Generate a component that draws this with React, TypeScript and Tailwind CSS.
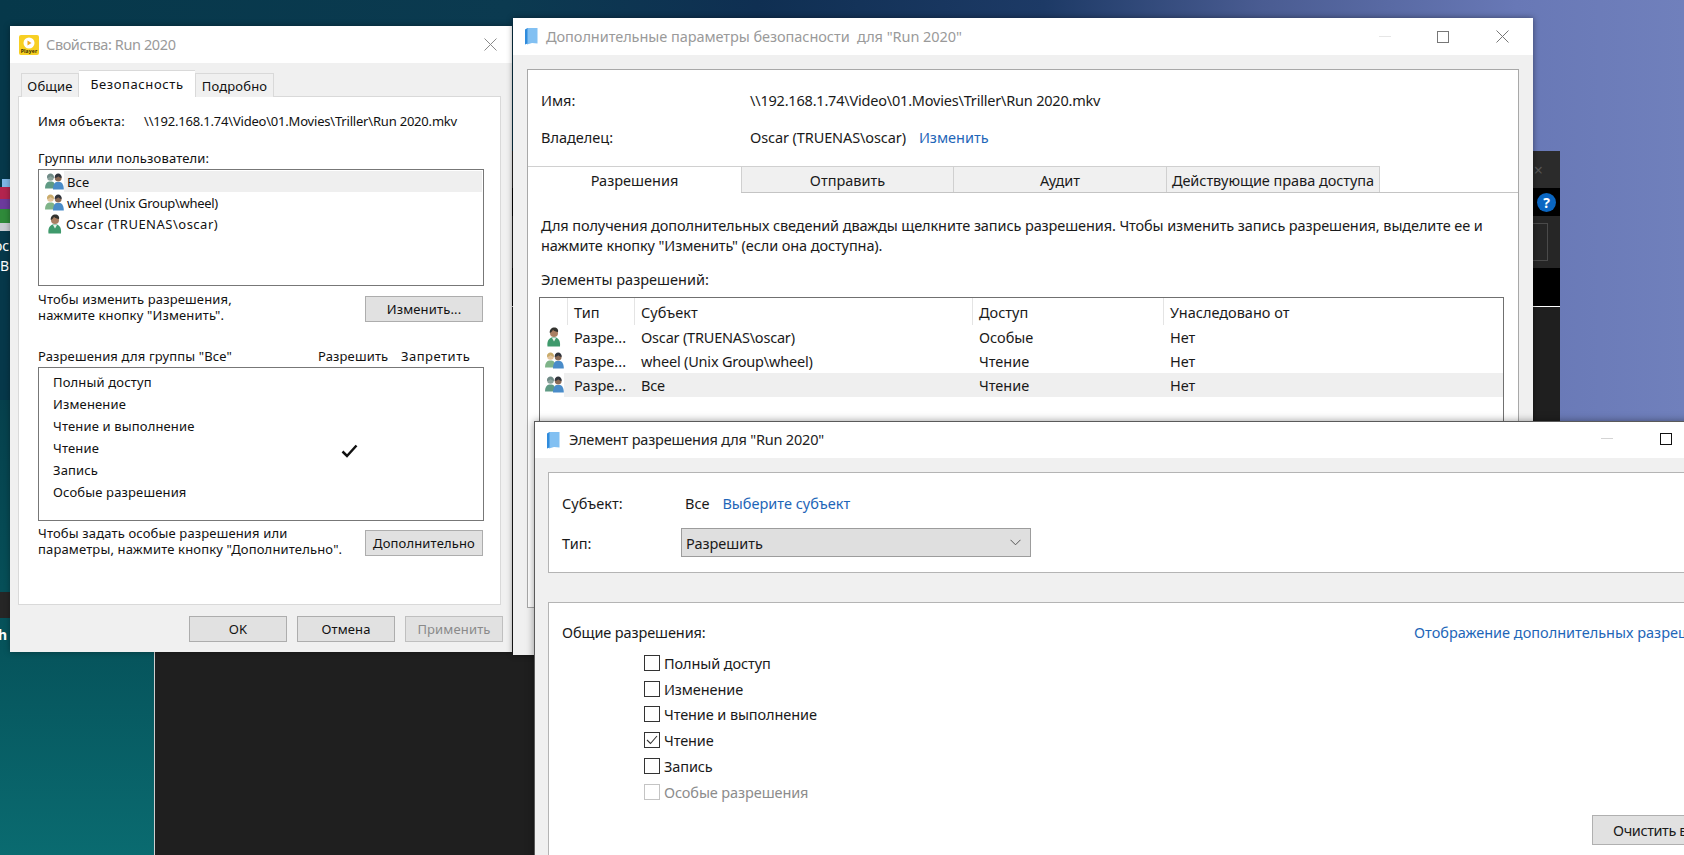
import React from "react";

const PersonIcon = () => (
  <svg width="18" height="20" viewBox="0 0 18 20" className="shrink-0">
    <path d="M2.500 19.500c-.8-5 1.200-8 4-9h4.500c3 1 4.500 4 4 9z" fill="#3f9a6c" />
    <path d="M7 11l2 3.500 2-3.500z" fill="#e8f2ea" />
    <circle cx="9" cy="6" r="4" fill="#a97f62" />
    <path d="M4.800 6c-.5-3.500 2-5.500 4.500-5.500S13.800 2.500 13 5c-2-.2-4-1-5-2.300C7.500 4.200 6 5.500 4.800 6z" fill="#33332f" />
  </svg>
);

const GroupIcon = ({ back, hair, skin }: { back: string; hair: string; skin: string }) => (
  <svg width="19" height="18" viewBox="0 0 19 18" className="shrink-0">
    <path d="M0 15.500c0-4 1.500-6.500 4-7h3c2.500.5 3.500 3 3.500 7z" fill={back} />
    <circle cx="5.500" cy="4.500" r="3.300" fill={skin} />
    <path d="M2 5c-.3-3 1.500-4.500 3.500-4.500S9.200 2 8.900 5C7.500 4.500 6 3.800 5.500 3 4.800 4 3.500 4.800 2 5z" fill={hair} />
    <path d="M8 16.500c0-4 1.300-7 3.500-7.500h3.500c2.500.5 3.800 3.500 3.800 7.500z" fill="#4a8cc9" />
    <circle cx="13.200" cy="5" r="3.400" fill="#8a6a55" />
    <path d="M9.700 5c-.2-3 1.500-4.500 3.500-4.500S16.900 2 16.600 5c-1.500-.3-2.900-1-3.400-1.800-.7.900-2 1.600-3.500 1.800z" fill="#30343c" />
  </svg>
);

const AllIcon = () => <GroupIcon back="#5f9a84" hair="#6f8a86" skin="#8ba39d" />;
const WheelIcon = () => <GroupIcon back="#7fb489" hair="#c9ab6a" skin="#e3c49c" />;

const FolderIcon = () => (
  <svg width="13" height="17" viewBox="0 0 13 17" className="shrink-0">
    <path d="M2 0h10.500v15.500L7 15 2 16.500z" fill="#82c0f2" />
    <path d="M0 1.500L2.500 0v15.500L0 16.500z" fill="#2f8bdc" />
  </svg>
);

const PlayerIcon = () => (
  <div className="w-[20px] h-[20px] rounded-[2px] bg-[#f7cf23] flex flex-col items-center shrink-0 overflow-hidden">
    <svg width="12" height="12" viewBox="0 0 12 12" className="mt-[2px]">
      <circle cx="6" cy="6" r="5.500" fill="#fff" />
      <path d="M4.500 3.500l4 2.500-4 2.500z" fill="#f2a91e" />
    </svg>
    <span className="text-[5px] leading-[5px] font-bold text-[#3a3000]">Player</span>
  </div>
);

const CloseGlyph = ({ color }: { color: string }) => (
  <svg width="13" height="13" viewBox="0 0 13 13">
    <path d="M.5.500l12 12M12.500.500l-12 12" stroke={color} strokeWidth="1" fill="none" />
  </svg>
);

const Win10Button = ({ label, className }: { label: string; className: string }) => (
  <div className={`h-[26px] border border-[#adadad] bg-[#e1e1e1] flex items-center justify-center ${className}`}>
    {label}
  </div>
);

const perms = ["Полный доступ", "Изменение", "Чтение и выполнение", "Чтение", "Запись", "Особые разрешения"];

const PropertiesWindow = () => (
  <div className="absolute left-[10px] top-[26px] w-[502px] h-[626px] flex flex-col bg-[#f0f0f0] shadow-[0_0_6px_rgba(0,0,0,0.35)] text-[13px] leading-[16px] text-[#111] tracking-[0.15px]">
    <div className="h-[37px] bg-white flex items-center pl-[9px] pr-[15px] shrink-0">
      <PlayerIcon />
      <span className="ml-[7px] text-[14.500px] text-[#9a9a9a] tracking-[-0.4px] -mt-[1px]">Свойства: Run 2020</span>
      <div className="ml-auto flex">
        <CloseGlyph color="#8a8a8a" />
      </div>
    </div>

    <div className="flex-1 pl-[8px] pr-[9px] flex flex-col">
      <div className="flex items-end h-[34px] pl-[3px] -mb-px relative z-10 text-center">
        <div className="w-[58px] h-[24px] bg-[#f0f0f0] border border-b-0 border-[#d9d9d9] flex items-center justify-center">Общие</div>
        <div className="w-[116px] h-[27px] bg-white border-t border-[#d9d9d9] pb-[1px] flex items-center justify-center tracking-[0.6px]">Безопасность</div>
        <div className="w-[79px] h-[24px] bg-[#f0f0f0] border border-b-0 border-[#d9d9d9] flex items-center justify-center">Подробно</div>
      </div>

      <div className="mr-[2px] w-[483px] h-[509px] bg-white border border-[#d9d9d9] px-[19px] shrink-0">
        <div className="flex h-[20px] items-center mt-[14px]">
          <span className="w-[106px]">Имя объекта:</span>
          <span className="tracking-[-0.2px]">\\192.168.1.74\Video\01.Movies\Triller\Run 2020.mkv</span>
        </div>
        <div className="h-[20px] flex items-center mt-[17px]">Группы или пользователи:</div>
        <div className="mt-[1px] h-[117px] border border-[#777] p-[1px] w-[446px]">
          <div className="flex items-center h-[21px] pl-[5px]">
            <AllIcon />
            <span className="flex-1 ml-0 pl-[3px] bg-[#efefef] h-full flex items-center">Все</span>
          </div>
          <div className="flex items-center h-[21px] pl-[5px]">
            <WheelIcon />
            <span className="pl-[3px] tracking-[-0.3px]">wheel (Unix Group\wheel)</span>
          </div>
          <div className="flex items-center h-[21px] pl-[6px]">
            <PersonIcon />
            <span className="pl-[2px] tracking-[0.5px]">Oscar (TRUENAS\oscar)</span>
          </div>
        </div>
        <div className="flex mt-[5px] w-[445px] justify-between">
          <div>Чтобы изменить разрешения,<br />нажмите кнопку "Изменить".</div>
          <Win10Button label="Изменить..." className="w-[118px] mt-[5px]" />
        </div>

        <div className="flex items-center h-[20px] mt-[23px]">
          <span className="w-[280px]">Разрешения для группы "Все"</span>
          <span className="w-[83px]">Разрешить</span>
          <span className="tracking-[0.5px]">Запретить</span>
        </div>
        <div className="mt-px h-[154px] w-[446px] border border-[#777] pl-[14px] pt-[3px] relative">
          {perms.map((p) => (
            <div key={p} className="h-[22px] flex items-center">{p}</div>
          ))}
          <svg width="17" height="14" viewBox="0 0 17 14" className="absolute left-[302px] top-[76px]">
            <path d="M1.500 7.500l4.500 4.500L15.500 1.500" stroke="#111" strokeWidth="2.500" fill="none" />
          </svg>
        </div>
        <div className="flex mt-[4px] w-[445px] justify-between">
          <div>Чтобы задать особые разрешения или<br />параметры, нажмите кнопку "Дополнительно".</div>
          <Win10Button label="Дополнительно" className="w-[118px] mt-[5px]" />
        </div>
      </div>

      <div className="flex justify-end gap-[10px] mt-[11px]">
        <Win10Button label="OK" className="w-[98px]" />
        <Win10Button label="Отмена" className="w-[98px]" />
        <Win10Button label="Применить" className="w-[98px] bg-[#cccccc] border-[#bfbfbf] text-[#8a8a8a]" />
      </div>
    </div>
  </div>
);

const tableRows = [
  { icon: <PersonIcon />, who: "Oscar (TRUENAS\\oscar)", access: "Особые", selected: false },
  { icon: <WheelIcon />, who: "wheel (Unix Group\\wheel)", access: "Чтение", selected: false },
  { icon: <AllIcon />, who: "Все", access: "Чтение", selected: true },
];

const AdvancedWindow = () => (
  <div className="absolute left-[513px] top-[18px] w-[1020px] h-[637px] flex flex-col bg-[#f0f0f0] shadow-[0_0_6px_rgba(0,0,0,0.45)] text-[14.500px] leading-[20px] text-[#1a1a1a]">
    <div className="h-[37px] bg-white flex items-center pl-[12px] shrink-0 relative">
      <FolderIcon />
      <span className="ml-[8px] -mt-[2px] text-[#9a9a9a] text-[14.500px] tracking-[-0.05px]">Дополнительные параметры безопасности&nbsp; для "Run 2020"</span>
      <div className="ml-auto flex items-center">
        <div className="w-[12px] h-px bg-[#e6e6e6] mr-[46px]" />
        <div className="w-[12px] h-[12px] border border-[#777] mr-[47px]" />
        <div className="mr-[24px]"><CloseGlyph color="#777" /></div>
      </div>
    </div>

    <div className="flex-1 px-[14px] pt-[14px]">
      <div className="h-[539px] border border-[#a8a8a8] bg-white flex flex-col">
        <div className="px-[13px] pt-[18px]">
          <div className="flex items-center h-[24px]">
            <span className="w-[209px]">Имя:</span>
            <span className="tracking-[-0.2px]">\\192.168.1.74\Video\01.Movies\Triller\Run 2020.mkv</span>
          </div>
          <div className="flex items-center h-[24px] mt-[13px]">
            <span className="w-[209px]">Владелец:</span>
            <span className="tracking-[-0.1px]">Oscar (TRUENAS\oscar)</span>
            <span className="ml-[13px] text-[#1e66b8]">Изменить</span>
          </div>
        </div>

        <div className="mt-[17px] h-[27px] border-b border-[#c4c4c4] flex text-center shrink-0 relative">
          <div className="w-[213px] h-[27px] bg-white border-t border-[#d0d0d0] flex items-center justify-center relative z-10">Разрешения</div>
          <div className="w-[212px] h-[26px] bg-[#f0f0f0] border-t border-l border-[#d0d0d0] flex items-center justify-center">Отправить</div>
          <div className="w-[213px] h-[26px] bg-[#f0f0f0] border-t border-l border-[#d0d0d0] flex items-center justify-center">Аудит</div>
          <div className="w-[214px] h-[26px] bg-[#f0f0f0] border-t border-x border-[#d0d0d0] flex items-center justify-center tracking-[-0.05px]">Действующие права доступа</div>
        </div>

        <div className="pl-[11px] pr-[14px] pt-[22px]">
          <p className="pl-[2px] tracking-[-0.1px]">
            Для получения дополнительных сведений дважды щелкните запись разрешения. Чтобы изменить запись разрешения, выделите ее и<br />
            нажмите кнопку "Изменить" (если она доступна).
          </p>
          <div className="pl-[2px] mt-[14px]">Элементы разрешений:</div>
          <div className="mt-[8px] h-[220px] border border-[#707070]">
            <div className="grid grid-cols-[27px_67px_338px_191px_1fr] h-[27px]">
              <div />
              <div className="border-l border-[#e4e4e4] pl-[6px] flex items-center">Тип</div>
              <div className="border-l border-[#e4e4e4] pl-[6px] flex items-center">Субъект</div>
              <div className="border-l border-[#e4e4e4] pl-[6px] flex items-center">Доступ</div>
              <div className="border-l border-[#e4e4e4] pl-[6px] flex items-center">Унаследовано от</div>
            </div>
            {tableRows.map((r) => (
              <div key={r.who} className="flex h-[24px] items-center">
                <div className="w-[24px] pl-[5px] shrink-0 h-[20px] flex items-center">{r.icon}</div>
                <div className={`flex-1 h-full grid grid-cols-[70px_338px_191px_1fr] items-center ${r.selected ? "bg-[#efefef]" : ""}`}>
                  <span className="pl-[10px]">Разре...</span>
                  <span className="pl-[7px] tracking-[-0.2px]">{r.who}</span>
                  <span className="pl-[7px]">{r.access}</span>
                  <span className="pl-[7px]">Нет</span>
                </div>
              </div>
            ))}
          </div>
        </div>
      </div>
    </div>
  </div>
);

const EntryWindow = () => (
  <div className="absolute left-[534px] top-[421px] w-[1300px] h-[500px] flex flex-col bg-[#f0f0f0] border-l border-t border-[#5a5a5a] shadow-[0_0_8px_rgba(0,0,0,0.4)] text-[14.500px] leading-[20px] text-[#1a1a1a]">
    <div className="h-[36px] bg-white flex items-center pl-[12px] shrink-0 relative">
      <FolderIcon />
      <span className="ml-[9px] -mt-[3px] text-[#222] tracking-[-0.2px]">Элемент разрешения для "Run 2020"</span>
      <div className="absolute left-[1066px] top-[16px] w-[12px] h-px bg-[#d4d4d4]" />
      <div className="absolute left-[1125px] top-[11px] w-[12px] h-[12px] border border-[#111]" />
    </div>

    <div className="pl-[13px] pt-[14px]">
      <div className="h-[101px] border border-[#b4b4b4] bg-white pl-[13px] pt-[20px]">
        <div className="flex items-center h-[20px]">
          <span className="w-[123px]">Субъект:</span>
          <span>Все</span>
          <span className="ml-[13px] text-[#1e66b8]">Выберите субъект</span>
        </div>
        <div className="flex items-center h-[29px] mt-[15px]">
          <span className="w-[119px]">Тип:</span>
          <div className="w-[350px] h-[29px] bg-[#dfdfdf] border border-[#9c9c9c] pl-[4px] pr-[9px] flex items-center justify-between">
            Разрешить
            <svg width="11" height="7" viewBox="0 0 11 7">
              <path d="M.5.800l5 5 5-5" stroke="#555" fill="none" />
            </svg>
          </div>
        </div>
      </div>

      <div className="mt-[29px] h-[400px] border border-[#b4b4b4] bg-white pl-[13px] pt-[19px]">
        <div className="flex items-center h-[20px]">
          <span className="w-[852px] tracking-[-0.1px]">Общие разрешения:</span>
          <span className="text-[#1e66b8] whitespace-nowrap">Отображение дополнительных разрешений</span>
        </div>
        <div className="ml-[82px] mt-[8px]">
          {perms.map((p, i) => {
            const disabled = i === 5;
            return (
              <div key={p} className={`h-[25.800px] flex items-center tracking-[-0.1px] ${disabled ? "text-[#8c8c8c]" : ""}`}>
                <div className={`w-[16px] h-[16px] border mr-[4px] flex items-center justify-center ${disabled ? "border-[#c4c4c4]" : "border-[#333]"}`}>
                  {i === 3 && (
                    <svg width="12" height="10" viewBox="0 0 12 10">
                      <path d="M1 5l3.500 3.500L11 1" stroke="#333" strokeWidth="1.100" fill="none" />
                    </svg>
                  )}
                </div>
                {p}
              </div>
            );
          })}
        </div>
        <div className="ml-[1030px] mt-[10px] w-[160px] h-[30px] border border-[#b0b0b0] bg-[#e1e1e1] pl-[20px] flex items-center tracking-[-0.4px]">
          Очистить все
        </div>
      </div>
    </div>
  </div>
);

const BackgroundApp = () => (
  <div className="absolute left-[154px] top-[151px] w-[1406px] h-[704px] flex flex-col border-l border-[#cfcfcf] bg-[#1f1f1f]">
    <div className="h-[37px] bg-[#2b2b2b] flex items-center justify-end pr-[17px] text-[#555] text-[16px]">×</div>
    <div className="h-[28px] bg-black flex items-center justify-end pr-[4px]">
      <div className="w-[19px] h-[19px] rounded-full bg-[#0a66c2] text-white text-[14px] font-bold flex items-center justify-center">?</div>
    </div>
    <div className="h-[52px] bg-[#262626] flex items-center justify-end pr-[12px]">
      <div className="w-[30px] h-[38px] border border-[#4a4a4a]" />
    </div>
    <div className="h-[39px] bg-black border-b border-white shrink-0" />
  </div>
);

const DesktopLeftEdge = () => (
  <>
    <svg width="10" height="52" viewBox="0 0 10 52" className="absolute left-0 top-[179px]">
      <rect x="2" y="0" width="8" height="8" fill="#7fb7e8" />
      <rect x="0" y="8" width="10" height="12" fill="#b3244e" />
      <rect x="0" y="20" width="10" height="10" fill="#6c3a9c" />
      <rect x="0" y="30" width="10" height="14" fill="#2f8a3a" />
      <rect x="0" y="44" width="10" height="8" fill="#c9ccd2" />
    </svg>
    <div className="absolute left-[-6px] top-[238px] w-[16px] overflow-hidden text-white text-[14px] leading-[16px]">ос</div>
    <div className="absolute left-[0px] top-[258px] w-[10px] overflow-hidden text-white text-[14px] leading-[16px]">В</div>
    <div className="absolute left-0 top-[592px] w-[10px] h-[26px] bg-[#262626]" />
    <div className="absolute left-[-2px] top-[626px] w-[12px] overflow-hidden text-white text-[14px] leading-[18px] font-bold">h</div>
  </>
);

export default function App() {
  return (
    <div className="relative w-[1684px] h-[855px] overflow-hidden font-['Noto_Sans',sans-serif] bg-[linear-gradient(90deg,#06384a_0%,#0b3a50_30%,#0f2f52_45%,#1d3a66_62%,#4a5c92_75%,#6878b6_90%,#7080bc_100%)]">
      <div className="absolute left-0 top-[400px] w-[154px] h-[455px] bg-[linear-gradient(180deg,#06404c_0%,#06545c_55%,#0a6b70_100%)]" />
      <BackgroundApp />
      <DesktopLeftEdge />
      <PropertiesWindow />
      <AdvancedWindow />
      <EntryWindow />
    </div>
  );
}
